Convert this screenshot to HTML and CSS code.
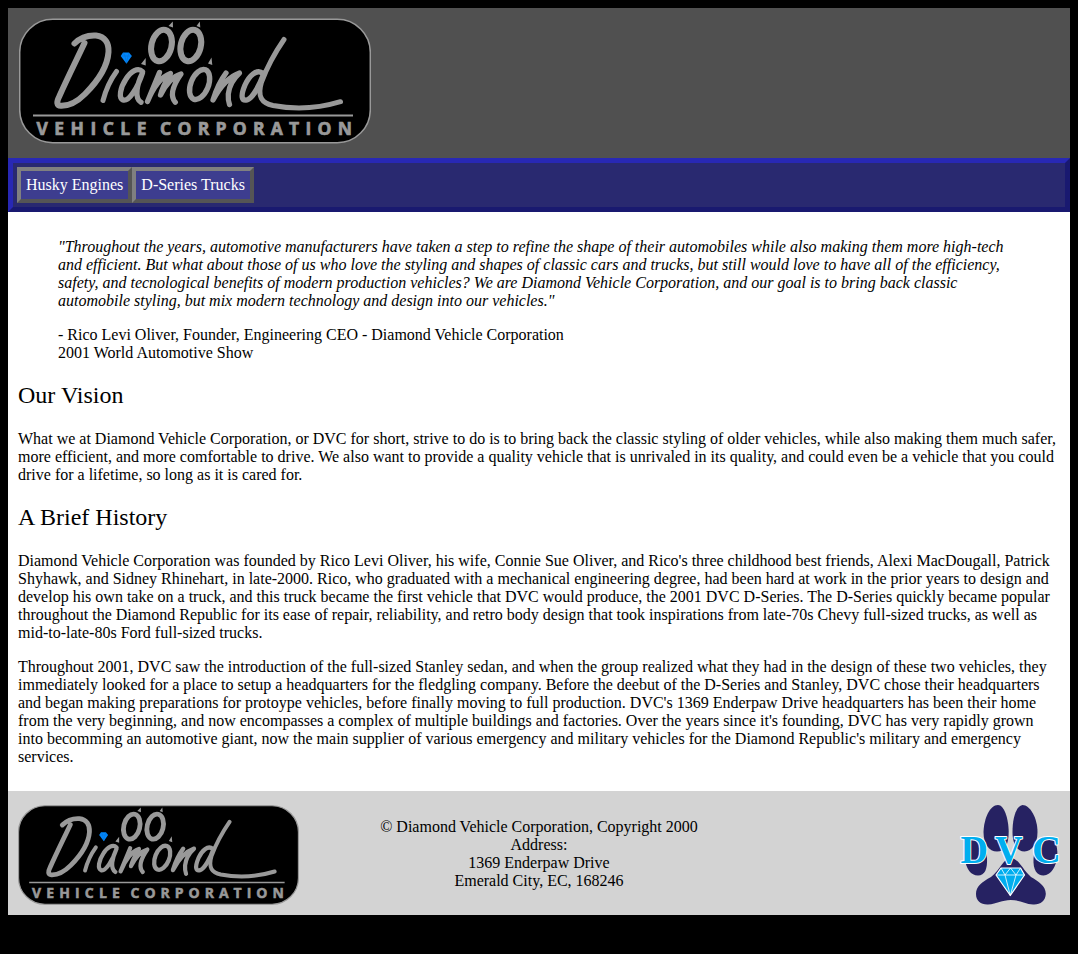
FILE: index.html
```html
<!DOCTYPE html>
<html lang="en">
<head>
<meta charset="utf-8">
<title>Diamond Vehicle Corporation</title>
<link rel="stylesheet" href="styles.css">
</head>
<body>
<svg class="defs" width="0" height="0" aria-hidden="true">
  <symbol id="logo" viewBox="19 18.500 352 125">
    <rect x="19.700" y="19.300" width="350.600" height="123.400" rx="33" fill="#000" stroke="#999" stroke-width="1.500"/>
    <g fill="none" stroke="#999" stroke-width="6" stroke-linecap="round" stroke-linejoin="round">
      <path d="M74.500 43.500C80 38 88 35 96 35.500C105 36.500 109 43 108.500 52C107.500 67 98 81 85 94C77 102 68 106 61 105.800C56.500 105.500 56.500 102 59 97C67 79 76 61 84.500 43"/>
      <path d="M116.500 71.500C111 79 106 89 103 100.500" stroke-width="5"/>
      <path d="M142.500 71.500C138 67 131 71 126 79C120 88 118.500 98 123 100C129 102 138 87 142.500 73C137 84 134 98 141 102.300" stroke-width="5.300"/>
      <path d="M159.500 72.500L147.500 101.500C153 88 161 77 170.500 73.500C166 81 162 88 160.500 95C165 86 171 77 181 74C174 84 169 95 175.300 102.300" stroke-width="5.300"/>
      <ellipse cx="199.600" cy="84.500" rx="8.800" ry="15.800" transform="rotate(22 199.600 84.500)" stroke-width="5.400"/>
      <path d="M226 73C220 81 216 90 213 100C220 87 228 77 239.500 73C233 79 229 87 228.300 94C228 99 228.500 102 229.500 104.500" stroke-width="5.300"/>
      <path d="M263 73.500C257 68 249 76 245 85C240 97 242 101 247 100C253 98 260 84 264 73" stroke-width="5.300"/>
      <path d="M284 39.500C274 54 266 70 261.500 82C257 97 262 103 273 105.500C294 109.500 318 108.500 340.500 101.700" stroke-width="5"/>
      <ellipse cx="161.500" cy="45.500" rx="10" ry="16" transform="rotate(14 161.500 45.500)"/>
      <ellipse cx="190.800" cy="45.500" rx="10" ry="16" transform="rotate(14 190.800 45.500)"/>
    </g>
    <path d="M168.500 26L172.800 21.500L173 27.500ZM196.500 26L199.800 21.500L200.300 27.500ZM141 64L145.700 58L145.700 65.500ZM208 63.500L211.500 57.500L212.300 65ZM33 114.500H353V116.500H33Z" fill="#999"/>
    <path d="M123 52.500H129L131.800 56L126.500 63.700L120.700 56Z" fill="#08f"/>
    <path d="M121 56H131.500M123.500 53L125 56L126.500 63L128 56L129 53" fill="none" stroke="#0870d0" stroke-width=".6"/>
    <text x="36.500" y="134.700" class="logo-name" textLength="110">VEHICLE</text>
    <text x="160" y="134.700" class="logo-name" textLength="192">CORPORATION</text>
  </symbol>
</svg>
<header class="header">
  <svg class="header-logo" role="img" aria-label="Diamond Vehicle Corporation"><use href="#logo"/></svg>
</header>
<nav class="nav">
  <a class="nav-link">Husky Engines</a>
  <a class="nav-link">D-Series Trucks</a>
</nav>
<main class="main">
  <blockquote class="quote">
    <i>"Throughout the years, automotive manufacturers have taken a step to refine the shape of their automobiles while also making them more high-tech and efficient. But what about those of us who love the styling and shapes of classic cars and trucks, but still would love to have all of the efficiency, safety, and tecnological benefits of modern production vehicles? We are Diamond Vehicle Corporation, and our goal is to bring back classic automobile styling, but mix modern technology and design into our vehicles."</i>
    <p class="byline">- Rico Levi Oliver, Founder, Engineering CEO - Diamond Vehicle Corporation<br>2001 World Automotive Show</p>
  </blockquote>
  <h2 class="heading">Our Vision</h2>
  <p>What we at Diamond Vehicle Corporation, or DVC for short, strive to do is to bring back the classic styling of older vehicles, while also making them much safer, more efficient, and more comfortable to drive. We also want to provide a quality vehicle that is unrivaled in its quality, and could even be a vehicle that you could drive for a lifetime, so long as it is cared for.</p>
  <h2 class="heading">A Brief History</h2>
  <p>Diamond Vehicle Corporation was founded by Rico Levi Oliver, his wife, Connie Sue Oliver, and Rico's three childhood best friends, Alexi MacDougall, Patrick Shyhawk, and Sidney Rhinehart, in late-2000. Rico, who graduated with a mechanical engineering degree, had been hard at work in the prior years to design and develop his own take on a truck, and this truck became the first vehicle that DVC would produce, the 2001 DVC D-Series. The D-Series quickly became popular throughout the Diamond Republic for its ease of repair, reliability, and retro body design that took inspirations from late-70s Chevy full-sized trucks, as well as mid-to-late-80s Ford full-sized trucks.</p>
  <p>Throughout 2001, DVC saw the introduction of the full-sized Stanley sedan, and when the group realized what they had in the design of these two vehicles, they immediately looked for a place to setup a headquarters for the fledgling company. Before the deebut of the D-Series and Stanley, DVC chose their headquarters and began making preparations for protoype vehicles, before finally moving to full production. DVC's 1369 Enderpaw Drive headquarters has been their home from the very beginning, and now encompasses a complex of multiple buildings and factories. Over the years since it's founding, DVC has very rapidly grown into becomming an automotive giant, now the main supplier of various emergency and military vehicles for the Diamond Republic's military and emergency services.</p>
</main>
<footer class="footer">
  <svg class="footer-logo" role="img" aria-label="Diamond Vehicle Corporation"><use href="#logo"/></svg>
  <p class="address">© Diamond Vehicle Corporation, Copyright 2000<br>Address:<br>1369 Enderpaw Drive<br>Emerald City, EC, 168246</p>
  <svg class="paw" viewBox="960 805 100 100" role="img" aria-label="DVC">
    <g fill="#262262">
      <path d="M998 805C990 805 984 818 983.500 832C983.500 844 989 851.500 997 851.500C1005 851.500 1008.700 844 1008.700 832C1008.500 818 1004 805 998 805Z"/>
      <path d="M1022.500 805C1016 806 1012.500 818 1012.500 832C1012.500 844 1017 851.500 1024.500 851.500C1032 851 1037.500 844 1037.500 832C1037.500 818 1030 805 1022.500 805Z"/>
      <path d="M973 837C966 838 963.500 849 965 859C966 869 971 875.500 978 875.500C985 875.500 987.500 869 987 858C986 846 980 836 973 837Z"/>
      <path d="M1048 836C1041 836 1034 848 1033.500 859C1033 870 1037 875.500 1043.500 875.500C1051 875.500 1056.500 866 1057.300 856C1058 845 1054 836 1048 836Z"/>
      <path d="M1010.700 857.500C1002 860 1001 869 991 877C982 882 976 886 976 894C976 901 981 904.800 988 904.500C997 904 1002 900 1010.700 900C1020 900 1025 904 1033 904.500C1040 905 1045.500 901 1045.800 894C1046 886 1038 881 1031 877C1022 869 1020 860 1010.700 857.500Z"/>
    </g>
    <g fill="#00aeef" stroke="#fff" stroke-linejoin="round">
      <path d="M1001 868H1020.500L1024.500 875L1010.300 895.500L996 875Z" stroke-width="1.200"/>
      <path d="M996 875H1024.500M1001 868L1005 875L1010.300 895.500L1016 875L1020.500 868M1005 875L1010.500 868L1016 875" fill="none" stroke-width=".8"/>
      <text class="monogram" x="960.500" y="862.500" textLength="27.500" lengthAdjust="spacingAndGlyphs">D</text>
      <text class="monogram" x="995" y="862.500" textLength="27.500" lengthAdjust="spacingAndGlyphs">V</text>
      <text class="monogram" x="1032" y="862.500" textLength="29" lengthAdjust="spacingAndGlyphs">C</text>
    </g>
  </svg>
</footer>
</body>
</html>
```
FILE: styles.css
```css
body {
  margin: 8px;
  background: #000;
  color: #000;
  font: 16px/18px "Liberation Serif", "Times New Roman", serif;
}
.defs { position: absolute; }
.header {
  box-sizing: border-box;
  height: 150px;
  padding: 10px 11px;
  background: #505050;
}
.header-logo { display: block; width: 352px; height: 126px; }
.logo-name {
  fill: #999;
  stroke: #999;
  stroke-width: .7px;
  font: bold 17.5px "Open Sans", sans-serif;
}
.nav {
  display: flex;
  padding: 4px;
  background: #292970;
  border: 5px solid;
  border-color: #2828b4 #191970 #191970 #2828b4;
}
.nav-link {
  padding: 5px;
  border: 4px solid;
  border-color: #808080 #555 #555 #808080;
  background: #3d3d8f;
  color: #fff;
}
.main { padding: 10px 10px 9px; background: #fff; display: flow-root; }
.quote { margin: 16px 40px; }
.byline { margin: 16px 0 0; }
.heading { margin: 19px 0 21px; font-size: 24px; font-weight: normal; line-height: 28px; }
.main > p { margin: 16px 0; }
.footer {
  display: grid;
  grid-template-columns: 281px 1fr 281px;
  align-items: start;
  padding: 14px 10px 10px;
  background: #d3d3d3;
}
.footer-logo { width: 281px; height: 100px; }
.address { margin: 13px 0 0; text-align: center; }
.paw { width: 100px; height: 100px; justify-self: end; overflow: visible; }
.monogram {
  font: bold 41px "Liberation Serif", serif;
  paint-order: stroke;
  stroke-width: 2px;
}
```
